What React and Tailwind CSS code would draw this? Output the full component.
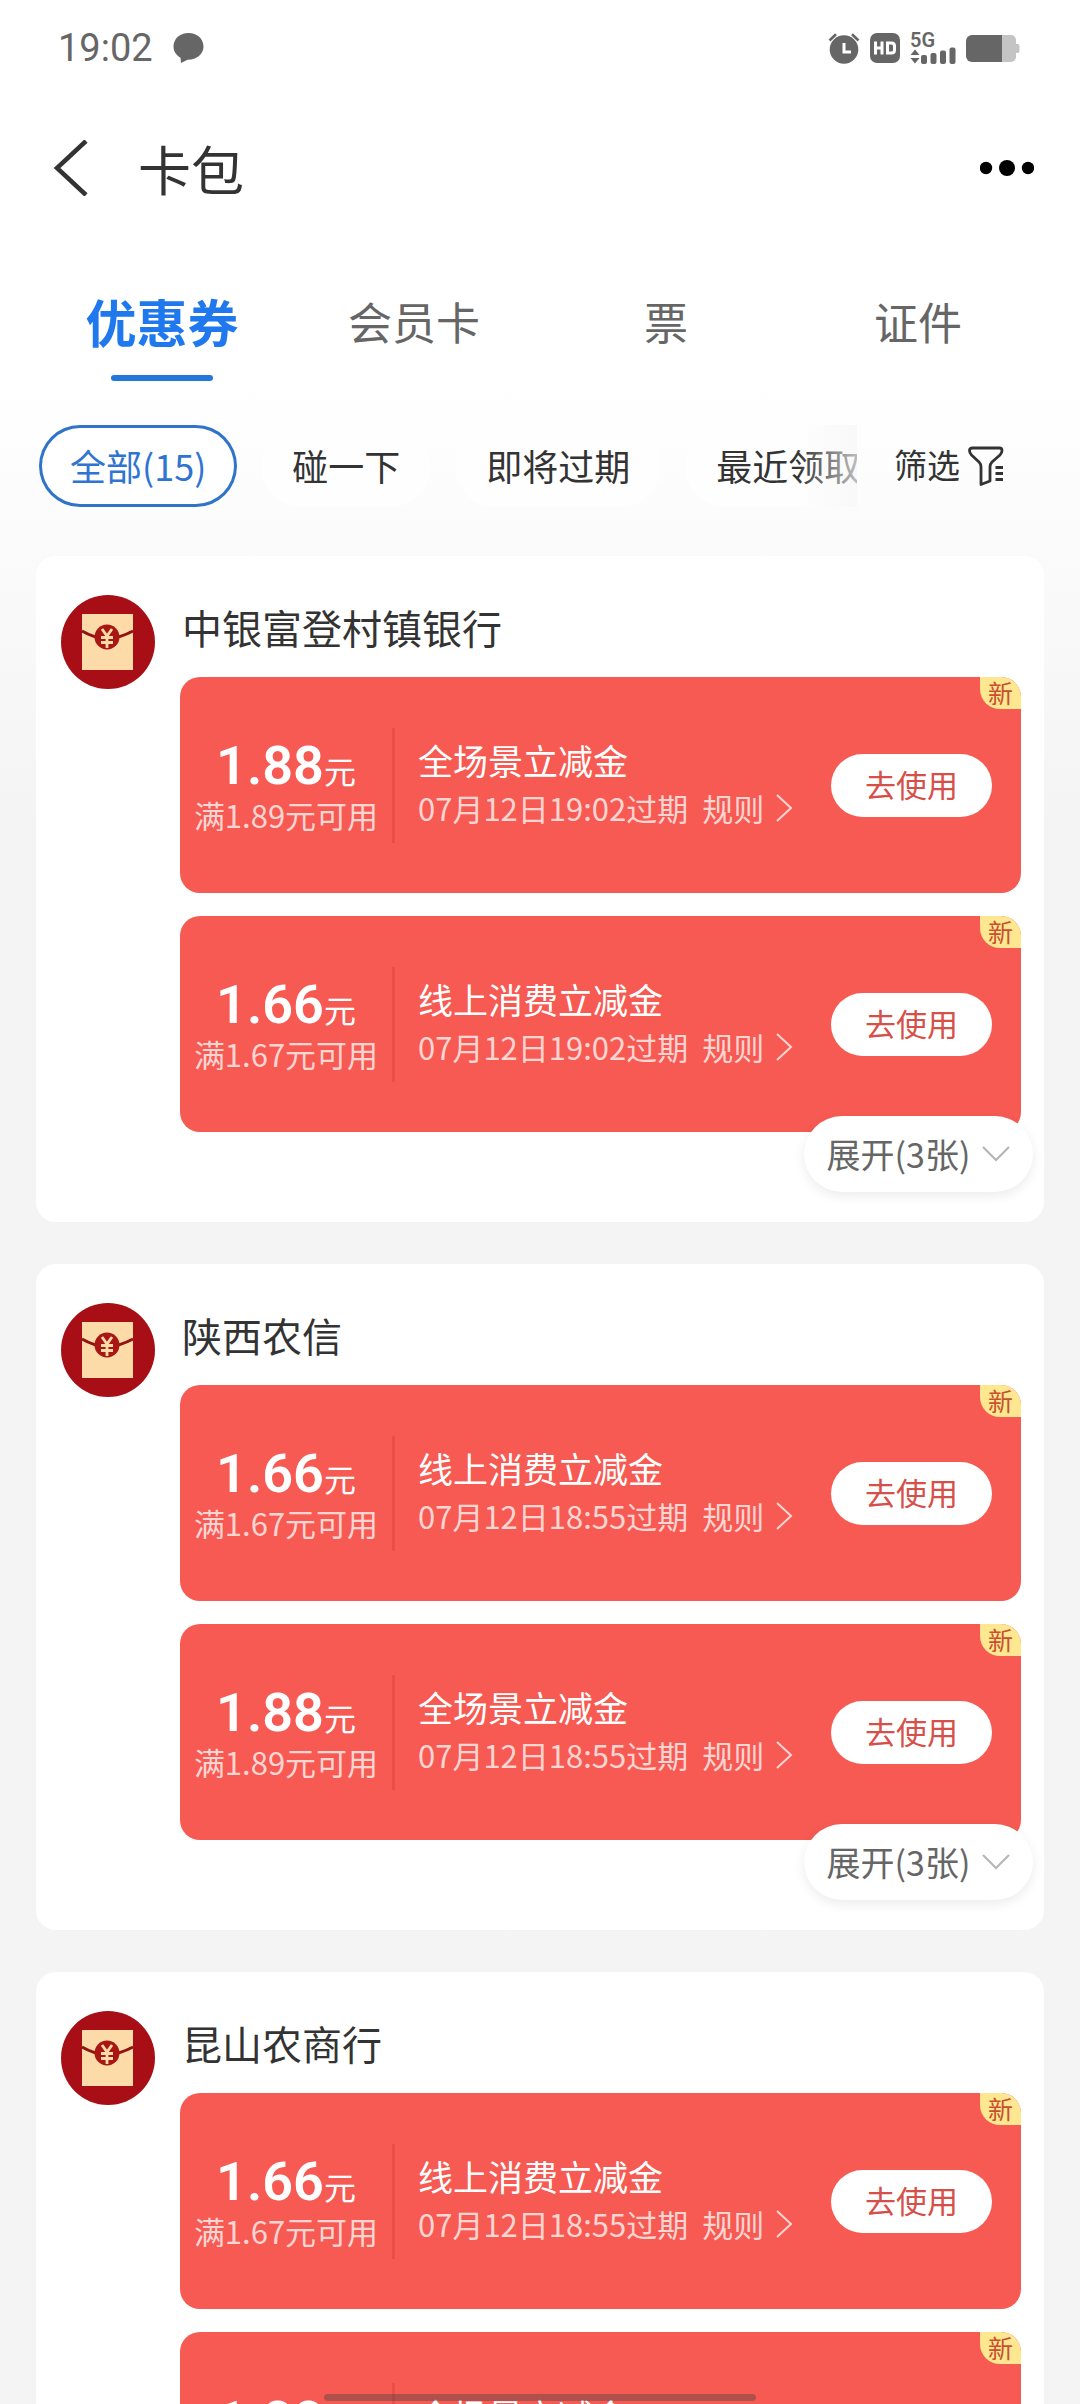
import React, { useState } from "react"

const TABS = ["优惠券", "会员卡", "票", "证件"]
const FILTERS = ["全部(15)", "碰一下", "即将过期", "最近领取"]

const ALL = { amount: "1.88", limit: "满1.89元可用", title: "全场景立减金" }
const ONLINE = { amount: "1.66", limit: "满1.67元可用", title: "线上消费立减金" }

const GROUPS = [
  { bank: "中银富登村镇银行", time: "07月12日19:02过期", coupons: [ALL, ONLINE] },
  { bank: "陕西农信", time: "07月12日18:55过期", coupons: [ONLINE, ALL] },
  { bank: "昆山农商行", time: "07月12日18:55过期", coupons: [ONLINE, ALL] },
]

function StatusBar() {
  return (
    <div className="flex h-24 items-center justify-between pl-[58px] pr-[60px] text-[#666666]">
      <div className="flex items-center gap-5">
        <span className="font-['Roboto','Noto_Sans_CJK_SC',sans-serif] text-[38px] leading-none">19:02</span>
        <svg width="31" height="30" viewBox="0 0 31 30" fill="currentColor" aria-hidden="true">
          <path d="M15.500 0C7 0 .5 5.800 .5 13.500c0 4.800 2.600 8.800 7 11.200L8 30l6.500-3.200C23.500 27 30.500 21 30.500 13.500 30.500 5.800 24 0 15.500 0Z" />
        </svg>
      </div>
      <div className="flex items-center gap-[10px]">
        <svg width="32" height="31" viewBox="0 0 32 31" aria-hidden="true">
          <circle cx="16" cy="16.500" r="14.300" fill="currentColor" />
          <path d="M1.500 7.500 8 1.200M30.500 7.500 24 1.200" stroke="currentColor" strokeWidth="2.600" fill="none" />
          <path d="M16 10v9h7" stroke="#fff" strokeWidth="3" fill="none" />
        </svg>
        <svg width="30" height="30" viewBox="0 0 30 30" aria-hidden="true">
          <rect width="30" height="30" rx="7" fill="currentColor" />
          <path d="M5.500 8.500v13M12 8.500v13M5.500 15H12M17.500 10v10h4c2 0 3-1 3-3v-4c0-2-1-3-3-3Z" stroke="#fff" strokeWidth="3" fill="none" />
        </svg>
        <svg className="overflow-visible" width="46" height="31" viewBox="0 0 46 31" fill="currentColor" aria-hidden="true">
          <text x="0" y="14" fontSize="20" fontWeight="600" fontFamily="Roboto, sans-serif">5G</text>
          <path d="M5 16.500 9.500 22H.5ZM5 30.500 .5 25h9Z" />
          <rect x="11" y="22" width="6" height="9" rx="2" />
          <rect x="20.500" y="20" width="6" height="11" rx="2" />
          <rect x="30" y="17.500" width="6" height="13.500" rx="2" />
          <rect x="39.500" y="14.500" width="6" height="16.500" rx="2" />
        </svg>
        <svg width="54" height="27" viewBox="0 0 54 27" aria-hidden="true">
          <path d="M36 0h9a5 5 0 0 1 5 5v4h1.500a2 2 0 0 1 2 2v5a2 2 0 0 1-2 2H50v4a5 5 0 0 1-5 5h-9Z" fill="#c4c4c4" />
          <path d="M6 0h30v27H6a6 6 0 0 1-6-6V6a6 6 0 0 1 6-6Z" fill="currentColor" />
        </svg>
      </div>
    </div>
  )
}

function Header() {
  return (
    <header className="flex h-[144px] items-center pl-[53px] pr-[46px]">
      <button aria-label="返回" className="text-[#333333]">
        <svg width="36" height="56" viewBox="0 0 36 56" fill="none" stroke="currentColor" strokeWidth="4.500">
          <path d="M33 1 4 28l29 27" />
        </svg>
      </button>
      <h1 className="ml-[49px] flex-1 text-[53px] leading-none text-[#333333]">卡包</h1>
      <button aria-label="更多">
        <svg width="54" height="16" viewBox="0 0 54 16" fill="#000">
          <circle cx="6" cy="8" r="6.200" />
          <circle cx="27" cy="8" r="8" />
          <circle cx="48" cy="8" r="6.200" />
        </svg>
      </button>
    </header>
  )
}

function Envelope() {
  return (
    <svg className="size-[94px] shrink-0" viewBox="0 0 94 94" aria-hidden="true">
      <circle cx="47" cy="47" r="47" fill="#a80e16" />
      <rect x="21" y="19" width="51" height="56" fill="#fcdba8" />
      <path d="M21 36q12 7 25 8 13-1 26-8" fill="none" stroke="#8f1411" strokeWidth="3" />
      <circle cx="46" cy="42" r="12.500" fill="#a81714" />
      <path d="m41 34 5 7 5-7M46 41v12M40 42.500h12M40 47.500h12" fill="none" stroke="#fcdba8" strokeWidth="2.800" />
    </svg>
  )
}

function Coupon({ coupon, time }) {
  return (
    <li className="relative flex h-[216px] items-center rounded-[20px] bg-[#f65a52] pr-[29px] text-white">
      <div className="flex w-[212px] shrink-0 flex-col items-center pt-[2px]">
        <p className="flex items-baseline leading-[54px]">
          <span className="font-['Roboto','Noto_Sans_CJK_SC',sans-serif] text-[54px] font-semibold">{coupon.amount}</span>
          <span className="text-[32px]">元</span>
        </p>
        <p className="text-[31px] leading-[36px] text-white/75">{coupon.limit}</p>
      </div>
      <div className="h-[115px] w-[3px] shrink-0 bg-[#e94f48]" />
      <div className="min-w-0 flex-1 pb-[2px] pl-[23px]">
        <h3 className="text-[35px] leading-[48px]">{coupon.title}</h3>
        <div className="flex items-center text-[31px] leading-[48px] whitespace-nowrap text-white/75">
          <span>{time}</span>
          <a href="#rules" className="ml-[14px] flex items-center gap-3">
            规则
            <svg width="17" height="28" viewBox="0 0 17 28" fill="none" stroke="currentColor" strokeWidth="2">
              <path d="m1 1 14 13L1 27" />
            </svg>
          </a>
        </div>
      </div>
      <button className="h-[63px] w-[161px] shrink-0 rounded-full bg-white pb-[3px] text-[31px] leading-none text-[#d6504a]">
        去使用
      </button>
      <span className="absolute top-0 right-0 h-8 w-[41px] rounded-tr-[20px] rounded-bl-[20px] bg-[#fde791] text-center text-[25px] leading-[30px] text-[#c8502f]">
        新
      </span>
    </li>
  )
}

function CouponGroup({ group }) {
  return (
    <section className="flex gap-[25px] rounded-[20px] bg-white pt-[39px] pr-[23px] pb-[90px] pl-[25px]">
      <Envelope />
      <div className="relative min-w-0 flex-1">
        <h2 className="mb-[18px] pl-[2px] text-[40px] leading-[64px] text-[#333333]">{group.bank}</h2>
        <ul className="flex flex-col gap-[23px]">
          {group.coupons.map((coupon) => (
            <Coupon key={coupon.title} coupon={coupon} time={group.time} />
          ))}
        </ul>
        <button className="absolute -right-3 -bottom-[60px] flex h-[76px] w-[229px] items-center justify-center gap-3 rounded-full bg-white text-[34px] leading-none whitespace-nowrap text-[#666666] shadow-[0_4px_12px_rgba(0,0,0,0.08)]">
          展开(3张)
          <svg width="28" height="16" viewBox="0 0 28 16" fill="none" stroke="#b5b5b5" strokeWidth="2">
            <path d="m1 1 13 13L27 1" />
          </svg>
        </button>
      </div>
    </section>
  )
}

export default function App() {
  const [tab, setTab] = useState("优惠券")
  const [filter, setFilter] = useState("全部(15)")

  return (
    <div className="flex h-screen flex-col overflow-hidden bg-[#f4f4f4] bg-linear-to-b from-white from-[380px] to-[#f4f4f4] to-[820px] font-['Noto_Sans_CJK_SC',sans-serif]">
      <StatusBar />
      <Header />

      <nav className="grid h-[144px] shrink-0 grid-cols-4 px-9">
        {TABS.map((name) => (
          <button
            key={name}
            onClick={() => setTab(name)}
            className={`relative flex items-start justify-center pt-[51px] leading-[60px] ${
              tab === name ? "text-[51px] font-bold text-[#1f78ee]" : "text-[44px] text-[#666666]"
            }`}
          >
            {name}
            {tab === name && (
              <span className="absolute bottom-[3px] left-1/2 h-[6px] w-[102px] -translate-x-1/2 rounded-full bg-[#2478dc]" />
            )}
          </button>
        ))}
      </nav>

      <div className="mt-[41px] flex shrink-0 items-center pr-[76px] pl-[39px]">
        <div className="relative min-w-0 flex-1 overflow-hidden">
          <div className="flex gap-6">
            {FILTERS.map((name) => (
              <button
                key={name}
                onClick={() => setFilter(name)}
                className={`h-[82px] shrink-0 rounded-full px-[31px] pb-[3px] text-[36px] leading-none whitespace-nowrap ${
                  filter === name
                    ? "bg-white text-[#2f74d0] ring-3 ring-[#2f74c8] ring-inset"
                    : "bg-[#fefefe] text-[#333333]"
                }`}
              >
                {name}
              </button>
            ))}
          </div>
          <div className="pointer-events-none absolute inset-y-0 right-0 w-[60px] bg-linear-to-r from-[#f6f6f6]/0 to-[#f6f6f6]/70" />
        </div>
        <button className="ml-[37px] flex items-center gap-2 text-[33px] leading-none text-[#333333]">
          <span className="pb-[3px]">筛选</span>
          <svg width="36" height="40" viewBox="0 0 36 40" fill="none" stroke="currentColor" strokeWidth="2.800" strokeLinejoin="round">
            <path d="M4.500 2h27Q34 2 34 4.500 34 7 32 9l-8 7q-2 2-2 5v14l-9 3.500V21q0-3-2-5L3.500 9Q1.500 7 1.500 4.500 1.500 2 4.500 2Z" />
            <path d="M27.500 21.500H35M27.500 27.500H35M27.500 33.500H35" />
          </svg>
        </button>
      </div>

      <main className="mt-[49px] flex min-h-0 flex-1 flex-col gap-[42px] overflow-y-auto px-9 [scrollbar-width:none]">
        {GROUPS.map((group) => (
          <CouponGroup key={group.bank} group={group} />
        ))}
      </main>

      <div className="fixed bottom-[3px] left-1/2 h-[7px] w-2/5 -translate-x-1/2 rounded-full bg-[#444444]/40" />
    </div>
  )
}
